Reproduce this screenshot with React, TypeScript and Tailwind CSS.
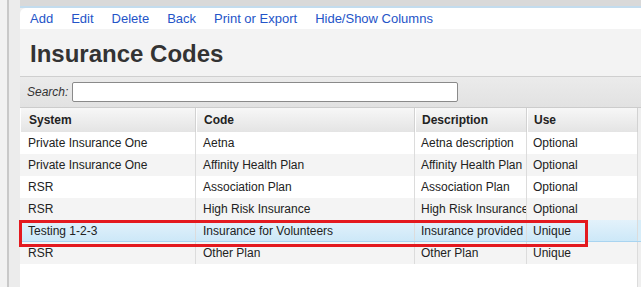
import React from "react";

const rows = [
  ["Private Insurance One", "Aetna", "Aetna description", "Optional"],
  ["Private Insurance One", "Affinity Health Plan", "Affinity Health Plan", "Optional"],
  ["RSR", "Association Plan", "Association Plan", "Optional"],
  ["RSR", "High Risk Insurance", "High Risk Insurance", "Optional"],
  ["Testing 1-2-3", "Insurance for Volunteers", "Insurance provided", "Unique"],
  ["RSR", "Other Plan", "Other Plan", "Unique"],
];

const widths = ["w-[176px]", "w-[219px]", "w-[112px]", "w-[111px]"];
const pads = ["pl-[8px]", "pl-[7px]", "pl-[6px]", "pl-[6px]"];

export default function App() {
  return (
    <div
      className="w-[641px] h-[287px] overflow-hidden flex bg-[#efefef] text-[#222]"
      style={{ fontFamily: '"Liberation Sans", Arial, sans-serif' }}
    >
      {/* left strip */}
      <div className="w-[7px] h-full bg-[#f2f2f2]" />
      <div className="w-[2px] h-full bg-[#c9c9c9]" />
      <div className="w-[11px] h-full bg-[#ececec]" />

      {/* main */}
      <div className="flex-1 flex flex-col min-w-0">
        <div className="h-[6px] bg-[#d9d9d9]" />
        <div className="h-[2px] bg-[#c3dcee]" />
        <div className="h-[21px] bg-white rounded-tl-[6px] flex items-center pl-[10px] pt-[1px] gap-[18px] text-[13px] text-[#2454c8]">
          <span>Add</span>
          <span>Edit</span>
          <span>Delete</span>
          <span>Back</span>
          <span>Print or Export</span>
          <span>Hide/Show Columns</span>
        </div>
        <div className="h-[47px] bg-[#f3f3f3] flex items-center pl-[10px] pt-[3px]">
          <span className="text-[24px] font-bold text-[#333] leading-none">Insurance Codes</span>
        </div>
        <div className="h-[31px] border-t border-[#cfcfcf] bg-gradient-to-b from-[#ebebeb] to-[#e2e2e2] flex items-center pl-[7px]">
          <span className="text-[12px] italic text-[#333]">Search:</span>
          <div className="ml-[4px] w-[386px] h-[20px] bg-white border border-[#8a8a8a] rounded-[2px]" />
        </div>
        {/* header */}
        <div className="flex h-[25px] border-t border-[#cccccc]">
          {["System", "Code", "Description", "Use"].map((h, i) => (
            <div
              key={h}
              className={`${widths[i]} ${pads[i]} shrink-0 h-full flex items-center text-[12px] font-bold bg-gradient-to-b from-[#f7f7f7] to-[#e4e4e4] border-r border-[#d2d2d2] border-l border-l-white`}
            >
              {h}
            </div>
          ))}
          <div className="flex-1 bg-[#efefef]" />
        </div>
        {/* rows */}
        {rows.map((r, ri) => {
          const hl = ri === 4;
          const bg = hl
            ? "bg-gradient-to-b from-[#e3f2fb] to-[#cde8f8]"
            : ri % 2 === 1
            ? "bg-[#f4f4f4]"
            : "bg-white";
          return (
            <div key={ri} className={`relative flex h-[22px] ${hl ? "border-b border-[#a9d4f0]" : ""}`}>
              {r.map((c, ci) => (
                <div
                  key={ci}
                  className={`${widths[ci]} ${pads[ci]} shrink-0 h-full flex items-center text-[12px] whitespace-nowrap overflow-hidden border-r border-[#dcdcdc] ${bg}`}
                >
                  {c}
                </div>
              ))}
              <div className={`flex-1 ${hl ? "bg-[#d7edf9]" : "bg-[#efefef]"}`} />
              {hl && (
                <div className="absolute z-10 left-[-1px] top-[0px] w-[569px] h-[27px] border-[3px] border-[#e3191f]" />
              )}
            </div>
          );
        })}
        <div className="flex flex-1">
          <div className="w-[618px] bg-white border-r border-[#dcdcdc]" />
          <div className="flex-1 bg-[#efefef]" />
        </div>
      </div>
    </div>
  );
}
